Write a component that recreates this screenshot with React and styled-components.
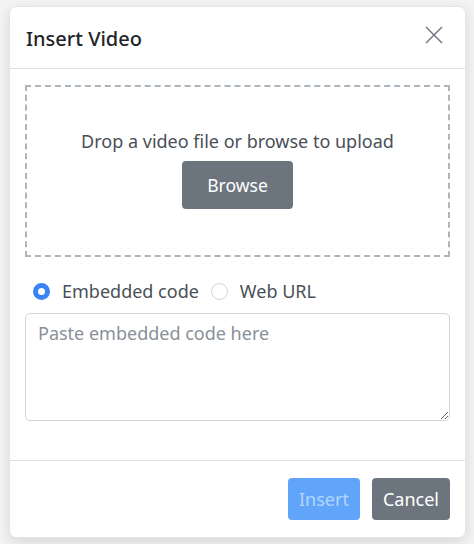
import React from 'react';
import styled, { createGlobalStyle } from 'styled-components';

const GlobalStyle = createGlobalStyle`
  body {
    margin: 0;
    background: #f4f4f4;
    font-family: "Noto Sans", "Open Sans", sans-serif;
  }
`;

function App() {
  return (
    <>
      <GlobalStyle />
      <Page>
        <Dialog>
          <Header>
            <Title>Insert Video</Title>
            <CloseButton aria-label="Close">
              <svg width="18" height="18" viewBox="0 0 18 18" fill="none" stroke="#6b7280" strokeWidth="1.4">
                <path d="M1 1 L17 17 M17 1 L1 17" />
              </svg>
            </CloseButton>
          </Header>
          <Body>
            <DropZone>
              <DropText>Drop a video file or browse to upload</DropText>
              <Button variant="secondary">Browse</Button>
            </DropZone>
            <RadioRow>
              <RadioLabel>
                <Radio checked />
                Embedded code
              </RadioLabel>
              <RadioLabel>
                <Radio />
                Web URL
              </RadioLabel>
            </RadioRow>
            <TextArea placeholder="Paste embedded code here" />
          </Body>
          <Footer>
            <Button variant="primary" disabled>Insert</Button>
            <Button variant="secondary">Cancel</Button>
          </Footer>
        </Dialog>
      </Page>
    </>
  );
}

const Page = styled.div`
  padding: 6px 8px 6px 9px;
`;

const Dialog = styled.div`
  width: 457px;
  box-sizing: border-box;
  background: #fff;
  border: 1px solid #e3e5e8;
  border-radius: 7px;
  box-shadow: 0 4px 14px rgba(0, 0, 0, 0.12);
`;

const Header = styled.div`
  display: flex;
  align-items: center;
  justify-content: space-between;
  height: 61px;
  padding: 0 22px 0 16px;
  border-bottom: 1px solid #dee2e6;
`;

const Title = styled.h2`
  margin: 2px 0 0;
  font-size: 20px;
  font-weight: 500;
  color: #212529;
`;

const CloseButton = styled.button`
  display: flex;
  padding: 0;
  border: none;
  background: none;
  margin-top: -6px;
`;

const Body = styled.div`
  padding: 16px 15px 39px 15px;
`;

const DropZone = styled.div`
  height: 172px;
  box-sizing: border-box;
  padding-top: 2px;
  border: 2px dashed #adb5bd;
  display: flex;
  flex-direction: column;
  align-items: center;
  justify-content: center;
  gap: 8px;
`;

const DropText = styled.div`
  font-size: 18px;
  color: #495057;
  margin-top: -6px;
`;

const Button = styled.button`
  font-family: inherit;
  font-size: 17.5px;
  border: none;
  border-radius: 4px;
  color: #fff;
  background: ${p => (p.variant === 'primary' ? '#60a5fa' : '#6c757d')};
  ${p => p.disabled && 'color: rgba(255,255,255,0.55);'}
  height: 48px;
  padding: 0 25px;
`;

const RadioRow = styled.div`
  display: flex;
  align-items: center;
  gap: 12px;
  margin: 22px 0 10px 8px;
`;

const RadioLabel = styled.label`
  display: flex;
  align-items: center;
  gap: 12px;
  font-size: 18px;
  color: #495057;
`;

const Radio = styled.span`
  width: 17px;
  height: 17px;
  box-sizing: border-box;
  border-radius: 50%;
  border: ${p => (p.checked ? '5px solid #3b82f6' : '1px solid #d1d5db')};
  background: #fff;
`;

const TextArea = styled.textarea`
  display: block;
  width: 100%;
  height: 108px;
  box-sizing: border-box;
  border: 1px solid #ced4da;
  border-radius: 5px;
  padding: 7px 12px;
  font-family: inherit;
  font-size: 18px;
  color: #495057;
  resize: vertical;
  &::placeholder {
    color: #8a9097;
  }
`;

const Footer = styled.div`
  display: flex;
  justify-content: flex-end;
  gap: 12px;
  padding: 17px 15px 17px;
  border-top: 1px solid #dee2e6;
  ${Button} {
    height: 42px;
    padding: 0 11px;
    font-size: 18px;
  }
`;

export default App;
